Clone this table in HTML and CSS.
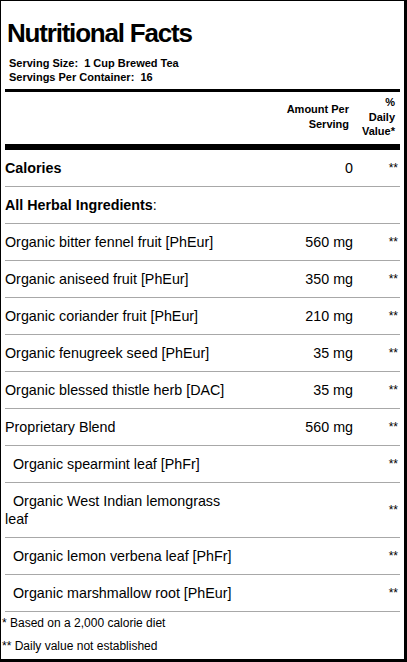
FILE: index.html
```html
<!DOCTYPE html>
<html>
<head>
<meta charset="utf-8">
<link rel="stylesheet" href="styles.css">
</head>
<body>
<div class="label">
  <div class="head">
    <h1 class="title">Nutritional Facts</h1>
    <div class="serving">Serving Size:&nbsp; 1 Cup Brewed Tea</div>
    <div class="serving">Servings Per Container:&nbsp; 16</div>
  </div>
  <div class="bar thin"></div>
  <div class="row colhead">
    <div class="name"></div>
    <div class="amt">Amount Per<br>Serving</div>
    <div class="dv">%<br>Daily<br>Value*</div>
  </div>
  <div class="bar thick"></div>
  <div class="row"><div class="name b">Calories</div><div class="amt">0</div><div class="dv">**</div></div>
  <div class="row"><div class="name"><span class="b">All Herbal Ingredients</span>:</div><div class="amt"></div><div class="dv"></div></div>
  <div class="row"><div class="name">Organic bitter fennel fruit [PhEur]</div><div class="amt">560 mg</div><div class="dv">**</div></div>
  <div class="row"><div class="name">Organic aniseed fruit [PhEur]</div><div class="amt">350 mg</div><div class="dv">**</div></div>
  <div class="row"><div class="name">Organic coriander fruit [PhEur]</div><div class="amt">210 mg</div><div class="dv">**</div></div>
  <div class="row"><div class="name">Organic fenugreek seed [PhEur]</div><div class="amt">35 mg</div><div class="dv">**</div></div>
  <div class="row"><div class="name">Organic blessed thistle herb [DAC]</div><div class="amt">35 mg</div><div class="dv">**</div></div>
  <div class="row"><div class="name">Proprietary Blend</div><div class="amt">560 mg</div><div class="dv">**</div></div>
  <div class="row"><div class="name sub">Organic spearmint leaf [PhFr]</div><div class="amt"></div><div class="dv">**</div></div>
  <div class="row"><div class="name sub">Organic West Indian lemongrass leaf</div><div class="amt"></div><div class="dv">**</div></div>
  <div class="row"><div class="name sub">Organic lemon verbena leaf [PhFr]</div><div class="amt"></div><div class="dv">**</div></div>
  <div class="row"><div class="name sub">Organic marshmallow root [PhEur]</div><div class="amt"></div><div class="dv">**</div></div>
  <div class="foot">
    <div class="note">* Based on a 2,000 calorie diet</div>
    <div class="note">** Daily value not established</div>
  </div>
</div>
</body>
</html>
```
FILE: styles.css
```css
html, body {
  margin: 0;
  padding: 0;
  background: #fff;
}
body {
  font-family: "Liberation Sans", Arial, sans-serif;
  color: #000;
}
.label {
  box-sizing: border-box;
  width: 407px;
  height: 662px;
  border: 1px solid #000;
  border-right-width: 3px;
  border-bottom-width: 3px;
  padding: 0 4px;
}
.head {
  padding: 17px 0 5px 2px;
}
.title {
  margin: 0 0 8px 0;
  font-size: 26px;
  line-height: 30px;
  font-weight: bold;
  letter-spacing: -1.2px;
}
.serving {
  font-size: 11px;
  line-height: 14px;
  font-weight: bold;
  padding-left: 2px;
}
.bar {
  background: #000;
}
.bar.thin { height: 3px; }
.bar.thick { height: 6px; }
.row {
  display: grid;
  grid-template-columns: 236px 1fr 47px;
  align-items: center;
  border-bottom: 1px solid #a8a8a8;
  font-size: 14.3px;
  line-height: 18px;
  padding: 9px 0;
}
.row .amt, .row .dv {
  text-align: right;
}
.row .dv {
  padding-right: 2px;
  font-size: 12px;
}
.b { font-weight: bold; }
.sub { text-indent: 8px; }
.colhead {
  border-bottom: none;
  font-size: 11px;
  font-weight: bold;
  line-height: 14.5px;
  padding: 3px 0 5px;
}
.colhead .amt { padding-right: 4px; }
.row.colhead .dv { padding-right: 5px; font-size: 11px; }
.foot {
  margin-left: -3px;
  padding-top: 2px;
}
.note {
  font-size: 12px;
  line-height: 18px;
}
.note + .note {
  margin-top: 5px;
}
```
